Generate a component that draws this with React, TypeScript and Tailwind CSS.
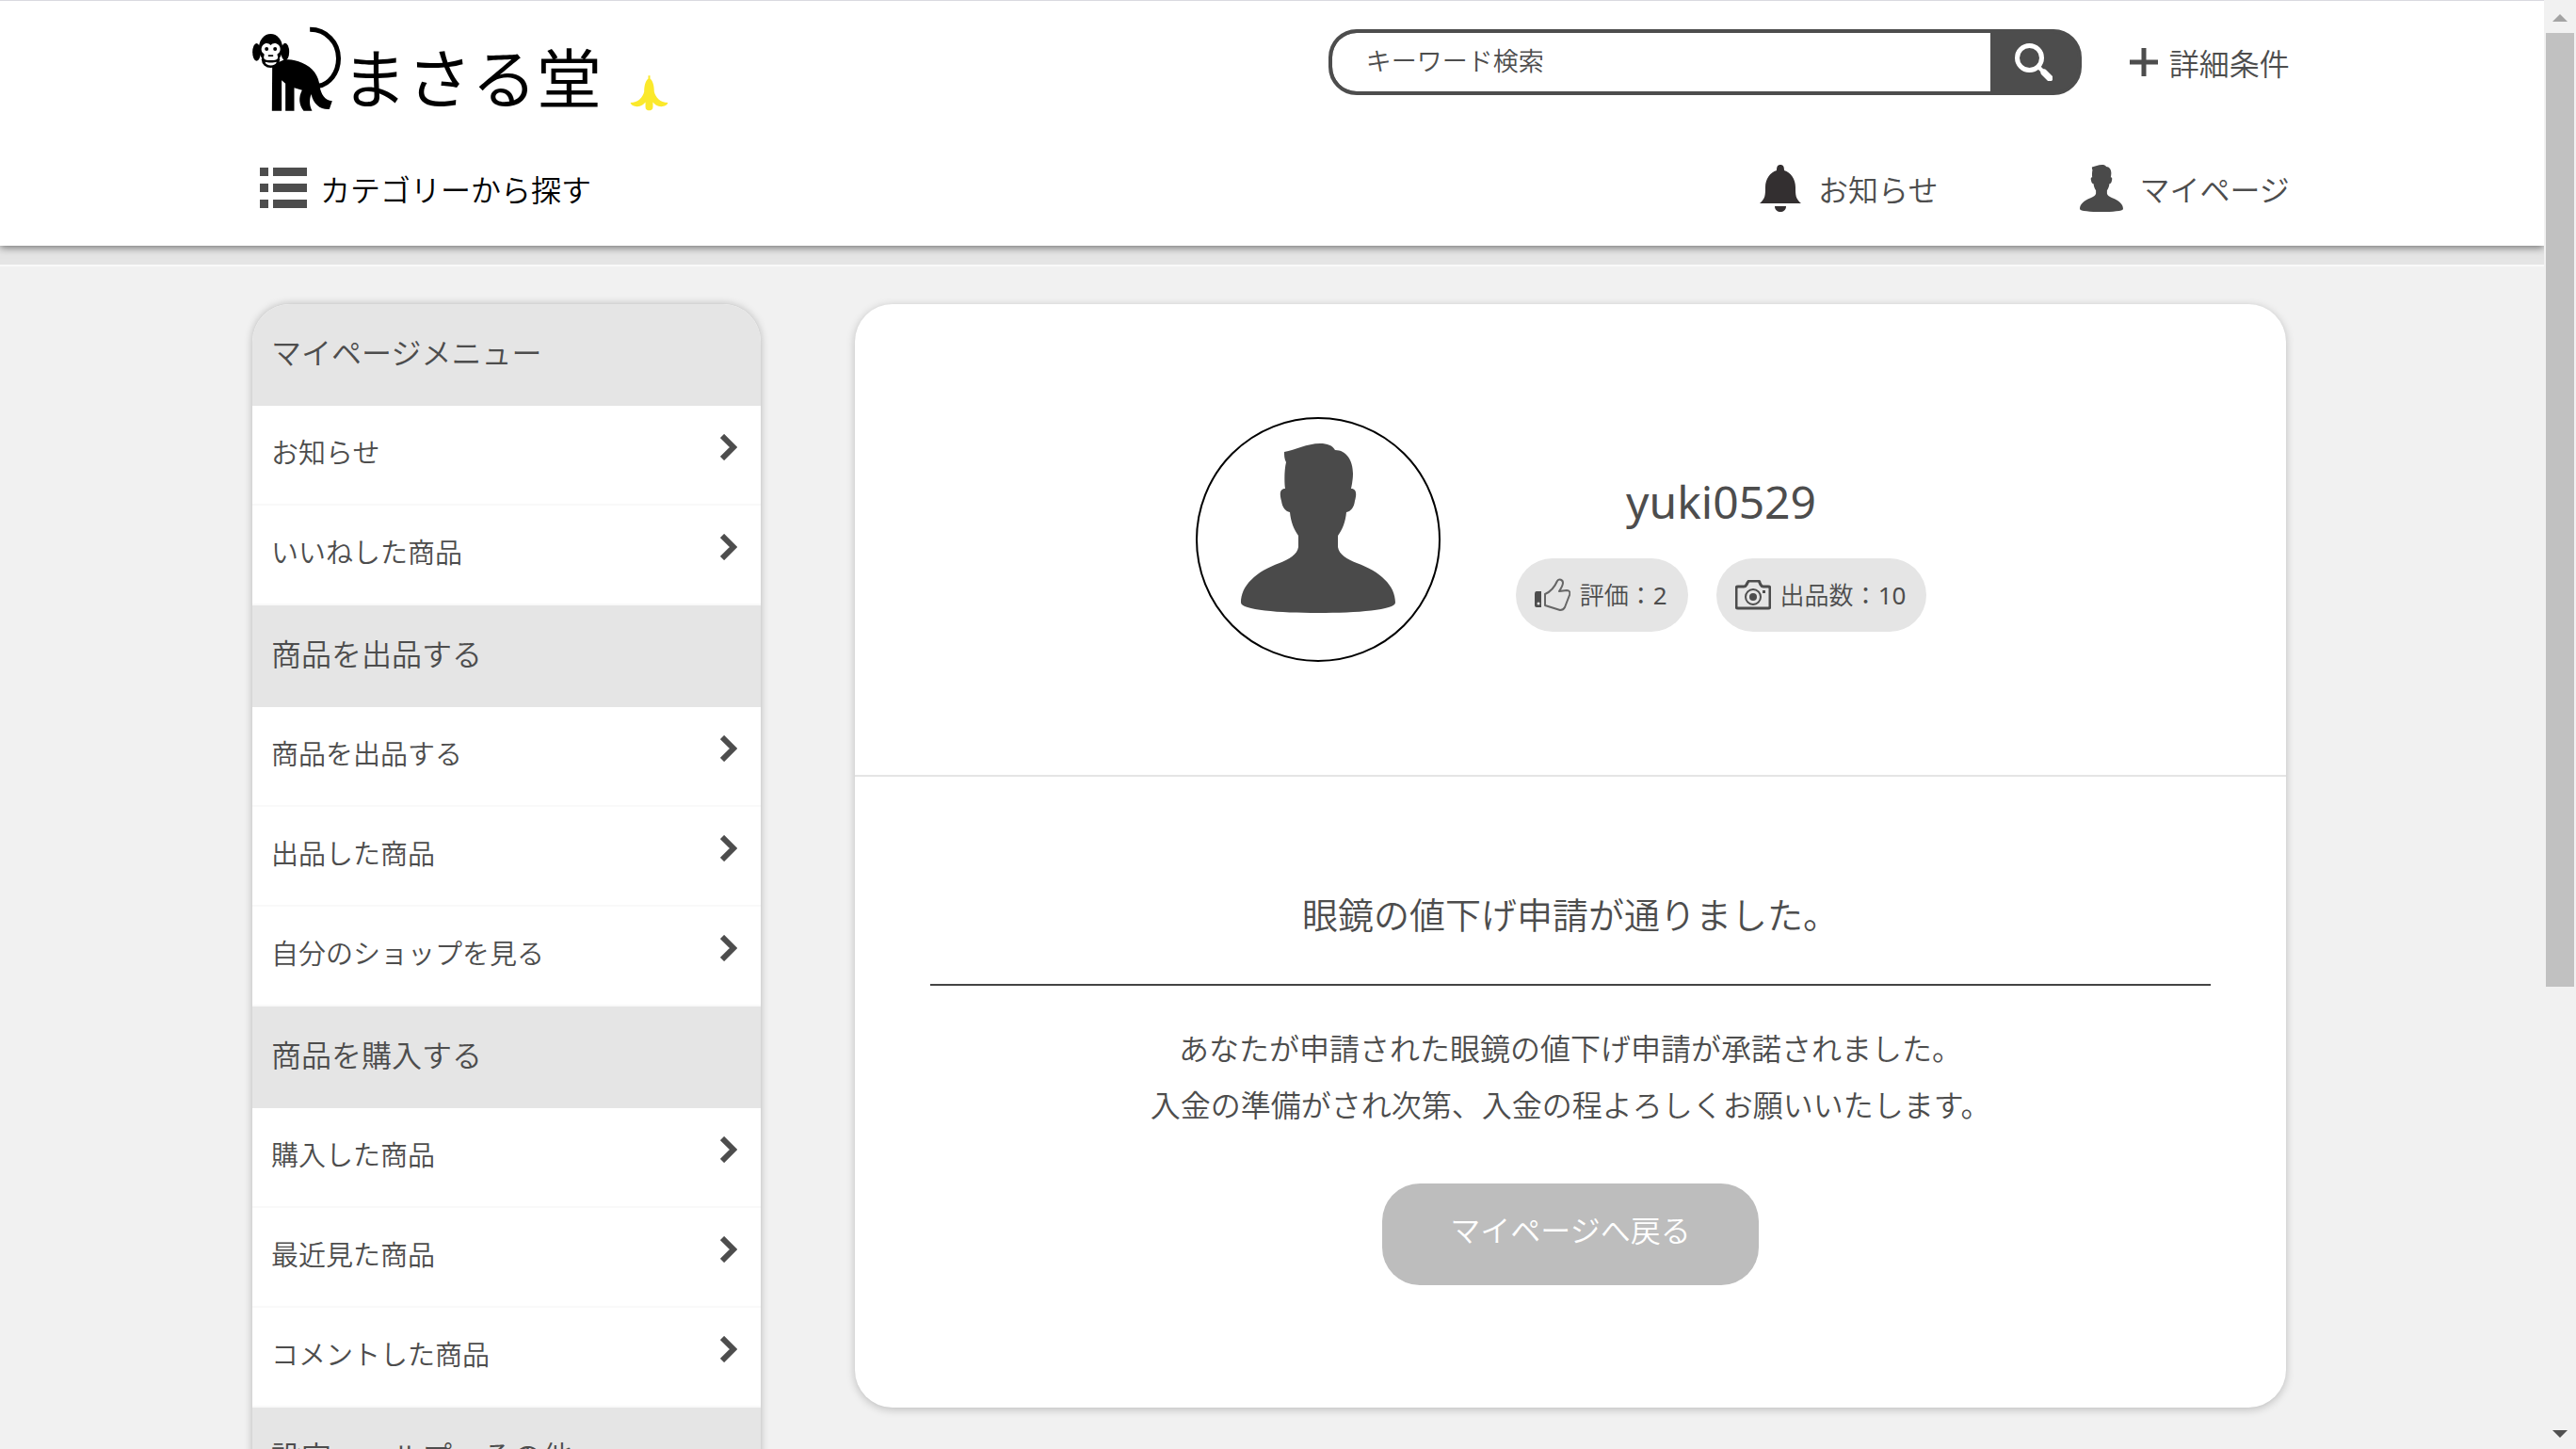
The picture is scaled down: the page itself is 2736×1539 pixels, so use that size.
import React from "react";

const INK = "#4d4d4d";

function MonkeyLogo() {
  return (
    <svg viewBox="54 54 284 270" className="h-[90px] w-[95px] shrink-0" aria-hidden="true">
      <path d="M237 64C290 64 328 106 328 156C328 204 298 238 264 244" fill="none" stroke="#000" strokeWidth="15" />
      <path d="M117 176L146 164C164 156 188 160 212 170C246 184 266 212 268 244C272 270 284 290 308 292L299 318C270 320 248 302 241 270C234 290 236 308 244 323H217C202 304 200 280 212 257L187 250V323H159V236L147 226V323H116Z" />
      <ellipse cx="67" cy="136" rx="13" ry="28" />
      <ellipse cx="158" cy="135" rx="13" ry="28" />
      <ellipse cx="112" cy="124" rx="38" ry="46" />
      <ellipse cx="112" cy="160" rx="29" ry="26" />
      <path d="M112 114C106 106 94 106 88 113C80 121 81 134 89 140C94 143 90 147 90 152C90 160 98 162 112 162C126 162 135 160 135 152C135 147 130 143 136 140C144 134 145 121 137 113C130 106 118 106 112 114Z" fill="#fff" />
      <path d="M94 167C103 170 122 170 131 167C128 182 97 182 94 167Z" fill="#fff" />
      <circle cx="99" cy="126" r="6" />
      <circle cx="126" cy="126" r="6" />
      <path d="M104 145H120V150H104Z" />
    </svg>
  );
}

function Banana() {
  return (
    <svg viewBox="1258 214 124 116" className="h-[39px] w-[41px]" fill="#fbe92b" aria-hidden="true">
      <path d="M1317 217H1323V227C1332 234 1336 250 1336 268C1341 288 1355 303 1380 304C1378 314 1362 319 1350 315C1342 312 1336 307 1332 302V318C1332 326 1326 329 1320 329C1314 329 1308 326 1308 318V302C1304 307 1298 312 1290 315C1278 319 1262 314 1260 304C1285 303 1299 288 1304 268C1304 250 1308 234 1317 227Z" />
    </svg>
  );
}

function ListIcon() {
  return (
    <svg viewBox="0 0 50 44" className="h-[44px] w-[50px] shrink-0" fill={INK} aria-hidden="true">
      {[0, 17, 34].map((y) => (
        <g key={y}>
          <rect x="0" y={y} width="9" height="9" />
          <rect x="14" y={y} width="36" height="9" />
        </g>
      ))}
    </svg>
  );
}

function BellIcon() {
  return (
    <svg viewBox="0 0 44 50" className="h-[50px] w-[44px] shrink-0" fill="#332f30" aria-hidden="true">
      <path d="M22 0C25 0 26 2 26 6C33 8 38 15 38 24C38 32 38 36 44 41H0C6 36 6 32 6 24C6 15 11 8 18 6C18 2 19 0 22 0Z" />
      <path d="M16 44H28C28 48 25 50 22 50C19 50 16 48 16 44Z" />
    </svg>
  );
}

function PersonIcon({ className }: { className: string }) {
  return (
    <svg viewBox="0 0 164 180" preserveAspectRatio="none" className={className} fill="#4a4a4a" aria-hidden="true">
      <path d="M46 9C58 7 70 0 84 0C92 0 97 2 100 7C112 7 119 18 119 32C119 38 118 43 117 48C123 48 123 54 121 61C120 68 117 72 112 73C111 83 108 91 103 98V110C104 118 113 123 123 127C148 136 164 151 164 169C164 177 123 180 82 180C41 180 0 177 0 169C0 151 16 136 41 127C51 123 60 118 61 110V98C56 91 53 83 52 73C47 72 44 68 43 61C41 54 41 48 47 48C46 42 46 28 48 20C46 16 46 13 46 9Z" />
    </svg>
  );
}

function SearchIcon() {
  return (
    <svg viewBox="0 0 40 40" className="size-[40px]" fill="none" stroke="#fff" aria-hidden="true">
      <circle cx="15.500" cy="15.500" r="13" strokeWidth="5" />
      <path d="M25 25L30 30" strokeWidth="4" />
      <path d="M31 31L37 37" strokeWidth="7" strokeLinecap="round" />
    </svg>
  );
}

function PlusIcon() {
  return (
    <svg viewBox="0 0 30 30" className="size-[30px] shrink-0" stroke={INK} strokeWidth="5" aria-hidden="true">
      <path d="M0 15H30M15 0V30" />
    </svg>
  );
}

function ThumbIcon() {
  return (
    <svg viewBox="0 0 38 36" className="h-[36px] w-[38px] shrink-0" aria-hidden="true">
      <path d="M2 14H7V31H2Q0 31 0 29V17Q0 14 2 14Z" fill={INK} />
      <circle cx="4" cy="27" r="1.500" fill="#e5e5e5" />
      <path d="M11 17C18 14 21 10 24 3C26 0 30 2 30 5C30 8 28 11 26 14L34 13C37 13 38 15 37 18L32 31C31 33 29 34 27 34L11 29Z" fill="none" stroke="#666" strokeWidth="2" strokeLinejoin="round" />
    </svg>
  );
}

function CameraIcon() {
  return (
    <svg viewBox="0 0 38 32" className="h-[32px] w-[38px] shrink-0" fill="none" stroke={INK} aria-hidden="true">
      <path d="M3 7H9Q11 7 12 5L13 3Q14 1 15 1H24Q26 1 26 3L27 5Q28 7 30 7H35Q37 7 37 9V28Q37 30 35 30H3Q1 30 1 28V9Q1 7 3 7Z" strokeWidth="3" />
      <circle cx="19" cy="18" r="8" strokeWidth="2" />
      <circle cx="19" cy="18" r="4" fill={INK} stroke="none" />
      <rect x="29" y="11" width="3" height="3" fill={INK} stroke="none" />
    </svg>
  );
}

function Chevron() {
  return (
    <svg viewBox="0 0 18 28" className="h-[28px] w-[18px] shrink-0" fill="none" stroke={INK} strokeWidth="6" aria-hidden="true">
      <path d="M2 2L14 14L2 26" />
    </svg>
  );
}

const menu = [
  { title: "マイページメニュー", items: ["お知らせ", "いいねした商品"] },
  { title: "商品を出品する", items: ["商品を出品する", "出品した商品", "自分のショップを見る"] },
  { title: "商品を購入する", items: ["購入した商品", "最近見た商品", "コメントした商品"] },
  { title: "設定・ヘルプ・その他", items: [] },
];

function Header() {
  return (
    <header className="relative border-t border-[#d9d9df] bg-white pr-[10%] pl-[9.92%] shadow-[0_2px_8px_rgba(0,0,0,0.5)]">
      <div className="flex h-[136px] items-start justify-between">
        <a href="#top" className="mt-[27px] flex items-end text-black">
          <MonkeyLogo />
          <span className="text-[69px] leading-[70px] font-normal">まさる堂</span>
          <span className="ml-[30px]">
            <Banana />
          </span>
        </a>
        <div className="mt-[30px] flex items-center">
          <form className="flex h-[70px] w-[800px] overflow-hidden rounded-[30px] border-4 border-[#4d4d4d] bg-[#4d4d4d]" onSubmit={(e) => e.preventDefault()}>
            <input
              type="text"
              aria-label="キーワード検索"
              placeholder="キーワード検索"
              className="min-w-0 flex-1 rounded-l-[26px] bg-white pb-[2px] pl-[36px] text-[27px] text-[#4d4d4d] outline-none placeholder:text-[#4d4d4d]"
            />
            <button type="submit" aria-label="検索" className="flex w-[93px] items-center justify-center">
              <SearchIcon />
            </button>
          </form>
          <a href="#detail" className="ml-[51px] flex items-center gap-[12px] text-[32px] leading-[48px]">
            <PlusIcon />
            <span className="pt-1">詳細条件</span>
          </a>
        </div>
      </div>
      <nav className="flex h-[124px] items-start pt-[38px] text-[32px] leading-[46px]">
        <a href="#category" className="ml-2 flex items-center gap-[14px] text-black">
          <ListIcon />
          <span className="pt-1">カテゴリーから探す</span>
        </a>
        <a href="#news" className="mr-[151px] ml-auto flex items-center gap-[18px]">
          <BellIcon />
          <span className="pt-1">お知らせ</span>
        </a>
        <a href="#mypage" className="flex items-center gap-[17px]">
          <PersonIcon className="h-[50px] w-[46px] shrink-0" />
          <span className="pt-1">マイページ</span>
        </a>
      </nav>
    </header>
  );
}

function Sidebar() {
  return (
    <aside className="w-1/4 shrink-0 overflow-hidden rounded-[40px] bg-white shadow-[0_0_8px_rgba(0,0,0,0.25)]">
      {menu.map((group) => (
        <section key={group.title}>
          <h2 className="h-[108px] bg-[#e5e5e5] px-5 pt-[28px] text-[32px] leading-[48px] font-[350]">{group.title}</h2>
          <ul>
            {group.items.map((item) => (
              <li key={item} className="border-b-2 border-[#f9f9f9]">
                <a href="#item" className="flex h-[104px] items-start justify-between pt-[26px] pr-[25px] pl-5 text-[29px] leading-[48px]">
                  {item}
                  <span className="mt-1">
                    <Chevron />
                  </span>
                </a>
              </li>
            ))}
          </ul>
        </section>
      ))}
    </aside>
  );
}

function Chip({ icon, label, value }: { icon: React.ReactNode; label: string; value: number }) {
  return (
    <span className="flex h-[78px] items-center gap-[10px] rounded-full bg-[#e5e5e5] pr-[22px] pl-5 text-[26px] leading-[40px] whitespace-nowrap">
      {icon}
      <span>
        {label}：<span className="font-normal">{value}</span>
      </span>
    </span>
  );
}

function Content() {
  return (
    <main className="ml-[100px] min-w-0 flex-1 self-start rounded-[40px] bg-white shadow-[0_2px_10px_rgba(0,0,0,0.22)]">
      <section className="flex h-[502px] items-center justify-center gap-20 border-b-2 border-[#e5e5e5] pr-5">
        <div className="flex size-[260px] justify-center rounded-full border-2 border-black pt-[26px]">
          <PersonIcon className="h-[180px] w-[164px]" />
        </div>
        <div className="flex flex-col items-center gap-[28px] pt-[26px]">
          <h1 className="text-[48px] leading-[64px] font-normal">yuki0529</h1>
          <div className="flex gap-[30px]">
            <Chip icon={<ThumbIcon />} label="評価" value={2} />
            <Chip icon={<CameraIcon />} label="出品数" value={10} />
          </div>
        </div>
      </section>
      <section className="flex flex-col items-center px-20 pt-[116px] pb-[130px] text-center">
        <h2 className="w-full border-b-2 border-[#444] pb-[44px] text-[38px] leading-[60px] font-[350]">眼鏡の値下げ申請が通りました。</h2>
        <p className="mt-[37px] text-[32px] leading-[60px]">
          あなたが申請された眼鏡の値下げ申請が承諾されました。
          <br />
          入金の準備がされ次第、入金の程よろしくお願いいたします。
        </p>
        <button type="button" className="mt-[53px] h-[108px] w-[400px] rounded-[40px] bg-[#bdbdbd] pb-2 text-[32px] leading-[48px] text-white">
          マイページへ戻る
        </button>
      </section>
    </main>
  );
}

function ScrollRail() {
  return (
    <div className="flex w-[34px] shrink-0 flex-col items-center justify-between bg-[#f1f1f1]" aria-hidden="true">
      <div className="flex min-h-0 w-full flex-1 flex-col items-center">
        <svg viewBox="0 0 16 8" className="mt-[15px] mb-3 h-2 w-4 shrink-0" fill="#a3a3a3">
          <path d="M8 0L16 8H0Z" />
        </svg>
        <div className="h-2/3 w-[30px] bg-[#c1c1c1]" />
      </div>
      <svg viewBox="0 0 16 8" className="mb-3 h-2 w-4 shrink-0" fill="#505050">
        <path d="M0 0H16L8 8Z" />
      </svg>
    </div>
  );
}

export default function App() {
  return (
    <div className="flex h-screen overflow-hidden bg-[#f1f1f1] font-['Noto_Sans','Noto_Sans_CJK_JP',sans-serif] font-[350] text-[#4d4d4d]">
      <div className="min-w-0 flex-1 overflow-hidden">
        <Header />
        <div className="h-[22px] border-b-2 border-[#f9f9f9] bg-[#e5e5e5]" />
        <div className="flex items-start pt-10 pr-[10.140%] pl-[9.920%]">
          <Sidebar />
          <Content />
        </div>
      </div>
      <ScrollRail />
    </div>
  );
}
